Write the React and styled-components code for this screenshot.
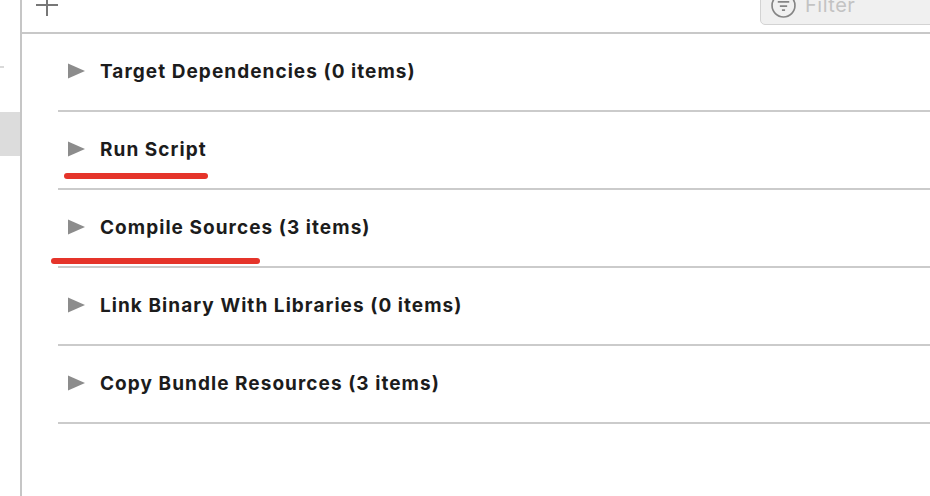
import styled, { createGlobalStyle } from 'styled-components';

const GlobalStyle = createGlobalStyle`
  html, body {
    margin: 0;
    padding: 0;
    background: #fff;
  }
  body {
    font-family: Inter, "Liberation Sans", sans-serif;
  }
`;

const Page = styled.div`
  display: flex;
  width: 930px;
  height: 496px;
  overflow: hidden;
  background: #fff;
`;

const Sidebar = styled.aside`
  width: 20px;
  flex-shrink: 0;
  border-right: 2px solid #c6c6c6;
  padding-top: 66px;
  display: flex;
  flex-direction: column;
`;

const Tick = styled.div`
  width: 4px;
  height: 2px;
  background: #d9d9d9;
`;

const SelectedItem = styled.div`
  margin-top: 44px;
  height: 44px;
  background: #dcdcdc;
`;

const Main = styled.main`
  flex: 1;
  display: flex;
  flex-direction: column;
  min-width: 0;
`;

const Toolbar = styled.div`
  height: 32px;
  border-bottom: 2px solid #c8c8c8;
  display: flex;
  align-items: flex-end;
  justify-content: space-between;
  overflow: hidden;
  padding-left: 14px;
`;

const AddButton = styled.svg`
  width: 22px;
  height: 22px;
  margin-bottom: 16px;
  flex-shrink: 0;
`;

const FilterField = styled.div`
  width: 202px;
  height: 40px;
  margin-bottom: 7px;
  margin-right: -32px;
  box-sizing: border-box;
  border: 1px solid #d3d3d3;
  border-radius: 5px;
  background: #f0f0f0;
  display: flex;
  align-items: center;
  gap: 9px;
  padding-left: 10px;
  flex-shrink: 0;
`;

const FilterText = styled.span`
  font-family: Inter, "Liberation Sans", sans-serif;
  font-size: 20px;
  letter-spacing: 0.5px;
  color: #c3c3c3;
`;

const List = styled.div`
  padding-left: 36px;
  display: flex;
  flex-direction: column;
`;

const Row = styled.div`
  position: relative;
  height: 76px;
  border-bottom: 2px solid #cbcbcb;
  display: flex;
  align-items: center;
  & > * {
    margin-top: -2px;
  }
`;

const Disclosure = styled.svg`
  width: 17px;
  height: 16px;
  margin-left: 10px;
  margin-right: 15px;
  flex-shrink: 0;
`;

const Title = styled.span`
  font-family: Inter, "Liberation Sans", sans-serif;
  font-weight: 700;
  font-size: 19px;
  color: #1c1c1c;
  letter-spacing: 1.05px;
  white-space: nowrap;
`;

const Mark = styled.div`
  position: absolute;
  top: ${(p) => p.$top}px;
  left: ${(p) => p.$left}px;
  width: ${(p) => p.$width}px;
  height: 6px;
  border-radius: 3px;
  background: #e5342a;
`;

const phases = [
  { title: 'Target Dependencies (0 items)' },
  { title: 'Run Script', mark: { top: 63, left: 6, width: 144 } },
  { title: 'Compile Sources (3 items)', mark: { top: 70, left: -7, width: 209 } },
  { title: 'Link Binary With Libraries (0 items)' },
  { title: 'Copy Bundle Resources (3 items)' },
];

const App = () => {
  return (
    <>
      <GlobalStyle />
      <Page>
        <Sidebar>
          <Tick />
          <SelectedItem />
        </Sidebar>
        <Main>
          <Toolbar>
            <AddButton viewBox="0 0 22 22">
              <path d="M0 11H22M11 0V22" stroke="#777" strokeWidth="2" fill="none" />
            </AddButton>
            <FilterField>
              <svg width="25" height="25" viewBox="0 0 24 24">
                <circle cx="12" cy="12" r="11" stroke="#858585" strokeWidth="1.6" fill="none" />
                <path d="M6.5 8.5H17.5M8.5 12.5H15.5M10.5 16.5H13.5" stroke="#858585" strokeWidth="1.7" fill="none" />
              </svg>
              <FilterText>Filter</FilterText>
            </FilterField>
          </Toolbar>
          <List>
            {phases.map((p) => (
              <Row key={p.title}>
                <Disclosure viewBox="0 0 17 16">
                  <polygon points="0,0.5 17,8 0,15.5" fill="#8c8c8c" />
                </Disclosure>
                <Title>{p.title}</Title>
                {p.mark && <Mark $top={p.mark.top} $left={p.mark.left} $width={p.mark.width} />}
              </Row>
            ))}
          </List>
        </Main>
      </Page>
    </>
  );
};

export default App;
